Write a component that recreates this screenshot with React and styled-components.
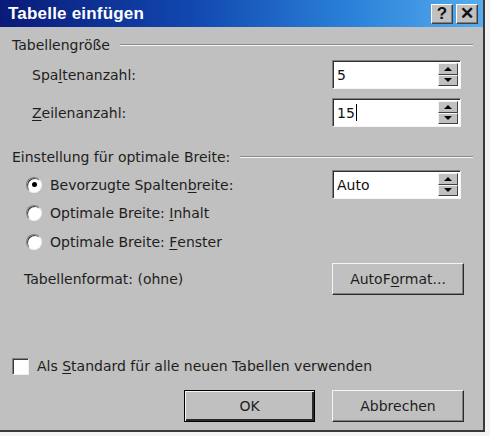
import React from 'react'
import styled, { createGlobalStyle } from 'styled-components'

const Global = createGlobalStyle`
  body {
    margin: 0;
    background: #f4f4f4;
    font-family: "DejaVu Sans", Verdana, sans-serif;
  }
`

const Window = styled.div`
  width: 485px;
  height: 432px;
  box-sizing: border-box;
  background: #c0c0c0;
  border-right: 2px solid #3a3a3a;
  border-bottom: 2px solid #3a3a3a;
  display: flex;
  flex-direction: column;
`

const TitleBar = styled.div`
  height: 27px;
  flex: none;
  display: flex;
  align-items: center;
  justify-content: space-between;
  padding: 0 5px 0 8px;
  background: linear-gradient(90deg, #0a1a78 0%, #1148b0 40%, #2a80d8 72%, #56acee 100%);
  color: #fff;
  font-family: "Liberation Sans", Arial, sans-serif;
  font-weight: bold;
  font-size: 17px;
  letter-spacing: 0.2px;
`

const TitleButtons = styled.div`
  display: flex;
  gap: 3px;
`

const CaptionButton = styled.div`
  width: 22px;
  height: 20px;
  box-sizing: border-box;
  background: #c0c0c0;
  border: 1px solid;
  border-color: #fff #404040 #404040 #fff;
  box-shadow: inset -1px -1px 0 #808080;
  display: flex;
  align-items: center;
  justify-content: center;
  color: #111;
  font-family: "Liberation Sans", Arial, sans-serif;
  font-size: 17px;
  font-weight: bold;
`

const Body = styled.div`
  flex: 1;
  display: flex;
  flex-direction: column;
  padding: 9px 10px 0 12px;
  color: #1e1e1e;
  font-size: 14px;
`

const GroupHeader = styled.div`
  height: 18px;
  display: flex;
  align-items: center;
  margin-top: ${p => p.$top || 0}px;
  &::after {
    content: "";
    flex: 1;
    margin-left: 10px;
    border-top: 1px solid #8a8a8a;
    border-bottom: 1px solid #f4f4f4;
  }
`

const Row = styled.div`
  height: ${p => p.$h || 29}px;
  margin-top: ${p => p.$top || 0}px;
  padding-left: ${p => p.$indent || 0}px;
  padding-right: ${p => p.$right || 0}px;
  display: flex;
  align-items: center;
  justify-content: space-between;
`

const Label = styled.span`
  display: flex;
  align-items: center;
  white-space: pre;
`

const U = styled.span`
  text-decoration: underline;
  text-underline-offset: 2px;
`

const Spin = styled.div`
  width: 129px;
  height: 29px;
  box-sizing: border-box;
  background: #fff;
  border: 1px solid;
  border-color: #808080 #f4f4f4 #f4f4f4 #808080;
  box-shadow: inset 1px 1px 0 #303030;
  display: flex;
  padding: 2px 2px 2px 4px;
`

const SpinText = styled.div`
  flex: 1;
  display: flex;
  align-items: center;
  color: #111;
`

const Caret = styled.span`
  display: inline-block;
  width: 1px;
  height: 17px;
  background: #000;
  margin-left: 1px;
`

const SpinButtons = styled.div`
  width: 20px;
  display: flex;
  flex-direction: column;
`

const SpinButton = styled.div`
  flex: 1;
  box-sizing: border-box;
  background: #c0c0c0;
  border: 1px solid;
  border-color: #f4f4f4 #404040 #404040 #f4f4f4;
  display: flex;
  align-items: center;
  justify-content: center;
  &::before {
    content: "";
    border-left: 4px solid transparent;
    border-right: 4px solid transparent;
    ${p => p.$down ? 'border-top: 4px solid #000;' : 'border-bottom: 4px solid #000;'}
  }
`

const Radio = styled.span`
  width: 16px;
  height: 16px;
  box-sizing: border-box;
  border-radius: 50%;
  background: #fff;
  border: 1px solid;
  border-color: #808080 #f0f0f0 #f0f0f0 #808080;
  box-shadow: inset 1px 1px 0 #3a3a3a;
  margin-right: 8px;
  display: flex;
  align-items: center;
  justify-content: center;
  &::after {
    content: "";
    width: 5px;
    height: 5px;
    border-radius: 50%;
    background: ${p => p.$on ? '#000' : 'transparent'};
  }
`

const Check = styled.span`
  width: 17px;
  height: 17px;
  box-sizing: border-box;
  background: #fff;
  border: 1px solid;
  border-color: #808080 #f0f0f0 #f0f0f0 #808080;
  box-shadow: inset 1px 1px 0 #3a3a3a;
  margin-right: 8px;
`

const Button = styled.div`
  width: ${p => p.$w || 132}px;
  height: 32px;
  box-sizing: border-box;
  background: #c0c0c0;
  border: 1px solid;
  border-color: ${p => p.$default ? '#000' : '#f4f4f4 #2a2a2a #2a2a2a #f4f4f4'};
  box-shadow: ${p => p.$default
    ? 'inset 1px 1px 0 #f4f4f4, inset -2px -2px 0 #2a2a2a'
    : 'inset -1px -1px 0 #808080'};
  display: flex;
  align-items: center;
  justify-content: center;
  color: #1e1e1e;
`

const Footer = styled.div`
  margin-top: 15px;
  padding-right: 9px;
  display: flex;
  justify-content: flex-end;
  gap: 17px;
`

const SpinBox = ({ children }) => (
  <Spin>
    <SpinText>{children}</SpinText>
    <SpinButtons>
      <SpinButton />
      <SpinButton $down />
    </SpinButtons>
  </Spin>
)

export default function App() {
  return (
    <Window>
      <Global />
      <TitleBar>
        <span>Tabelle einfügen</span>
        <TitleButtons>
          <CaptionButton>?</CaptionButton>
          <CaptionButton>✕</CaptionButton>
        </TitleButtons>
      </TitleBar>
      <Body>
        <GroupHeader>Tabellengröße</GroupHeader>
        <Row $top={6} $indent={20} $right={12}>
          <Label>Spa<U>l</U>tenanzahl:</Label>
          <SpinBox>5</SpinBox>
        </Row>
        <Row $top={9} $indent={20} $right={12}>
          <Label><U>Z</U>eilenanzahl:</Label>
          <SpinBox>15<Caret /></SpinBox>
        </Row>
        <GroupHeader $top={21}>Einstellung für optimale Breite:</GroupHeader>
        <Row $top={4} $indent={14} $right={12}>
          <Label><Radio $on />Bevorzugte Spalten<U>b</U>reite:</Label>
          <SpinBox>Auto</SpinBox>
        </Row>
        <Row $h={28} $indent={14}>
          <Label><Radio />Optimale Breite: <U>I</U>nhalt</Label>
        </Row>
        <Row $h={29} $indent={14}>
          <Label><Radio />Optimale Breite: <U>F</U>enster</Label>
        </Row>
        <Row $h={32} $top={7} $indent={12} $right={9}>
          <Label>Tabellenformat: (ohne)</Label>
          <Button>AutoF<U>o</U>rmat...</Button>
        </Row>
        <Row $h={18} $top={62}>
          <Label><Check />Als <U>S</U>tandard für alle neuen Tabellen verwenden</Label>
        </Row>
        <Footer>
          <Button $w={131} $default>OK</Button>
          <Button>Abbrechen</Button>
        </Footer>
      </Body>
    </Window>
  )
}
